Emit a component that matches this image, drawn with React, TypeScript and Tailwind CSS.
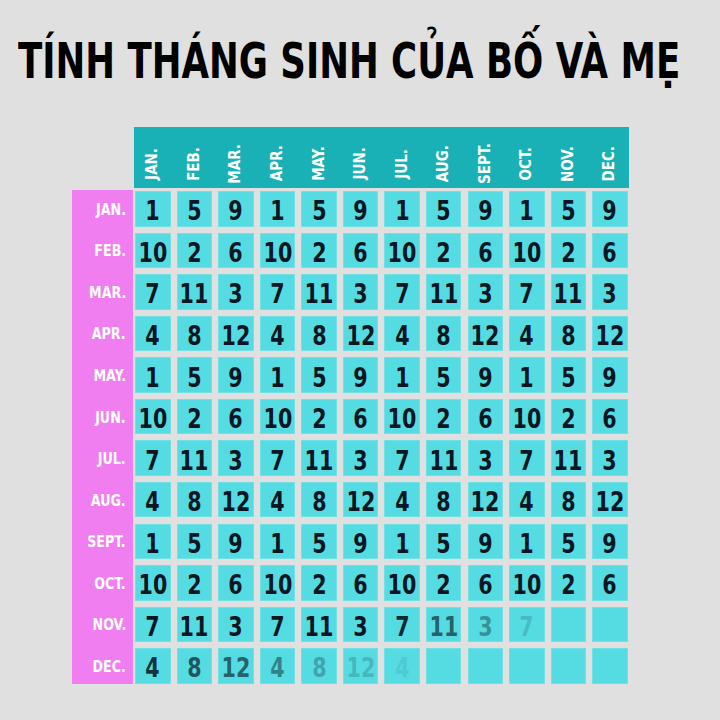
import React from "react";

const months = ["JAN.", "FEB.", "MAR.", "APR.", "MAY.", "JUN.", "JUL.", "AUG.", "SEPT.", "OCT.", "NOV.", "DEC."];
const patterns = [
  [1, 5, 9],
  [10, 2, 6],
  [7, 11, 3],
  [4, 8, 12],
];

const fade: Record<number, number[]> = {
  10: [1, 1, 1, 1, 1, 1, 0.9, 0.62, 0.38, 0.16, 0, 0],
  11: [0.85, 0.68, 0.62, 0.45, 0.28, 0.18, 0.08, 0, 0, 0, 0, 0],
};

export default function App() {
  const font = { fontFamily: '"DejaVu Sans Condensed", "DejaVu Sans", sans-serif' };
  return (
    <div className="w-[720px] h-[720px] bg-[#e0e0e0] overflow-hidden" style={font}>
      <h1 className="mt-[37px] ml-[18px] text-[49px] leading-none font-bold text-black whitespace-nowrap origin-left scale-x-[0.807]">
        TÍNH THÁNG SINH CỦA BỐ VÀ MẸ
      </h1>
      <div className="ml-[72px] mt-[41px]">
        <div className="flex">
          <div className="w-[62px] shrink-0" />
          <div className="w-[495px] h-[61px] bg-[#19b1b5] grid grid-cols-[repeat(12,35.5px)] gap-x-[6.07px] pl-px pt-[12px]">
            {months.map((m) => (
              <div key={m} className="flex items-center justify-center">
                <span className="[writing-mode:vertical-rl] rotate-180 text-white font-bold text-[15px] leading-none">
                  {m}
                </span>
              </div>
            ))}
          </div>
        </div>
        <div className="flex mt-[2px]">
          <div className="w-[61px] h-[494px] bg-[#f07ef0] shrink-0 pt-px grid grid-rows-[repeat(12,35.5px)] gap-y-[6.07px]">
            {months.map((m) => (
              <div key={m} className="flex items-center justify-end pr-[7px] pt-[2px]">
                <span className="text-white font-bold text-[16px] leading-none origin-right scale-x-[0.88]">{m}</span>
              </div>
            ))}
          </div>
          <div className="ml-[2px] mt-px grid grid-cols-[repeat(12,35.5px)] grid-rows-[repeat(12,35.5px)] gap-x-[6.07px] gap-y-[6.07px]">
            {months.map((_, r) =>
              months.map((__, c) => {
                const v = patterns[r % 4][c % 3];
                const op = fade[r] ? fade[r][c] : 1;
                return (
                  <div
                    key={`${r}-${c}`}
                    className="bg-[#55dce2] border border-[#72e1e6] flex items-center justify-center pt-[4px]"
                  >
                    {op > 0 && (
                      <span
                        className="text-[27px] leading-none font-bold text-[#0b1622] scale-x-[0.85]"
                        style={{ opacity: op }}
                      >
                        {v}
                      </span>
                    )}
                  </div>
                );
              })
            )}
          </div>
        </div>
      </div>
    </div>
  );
}
